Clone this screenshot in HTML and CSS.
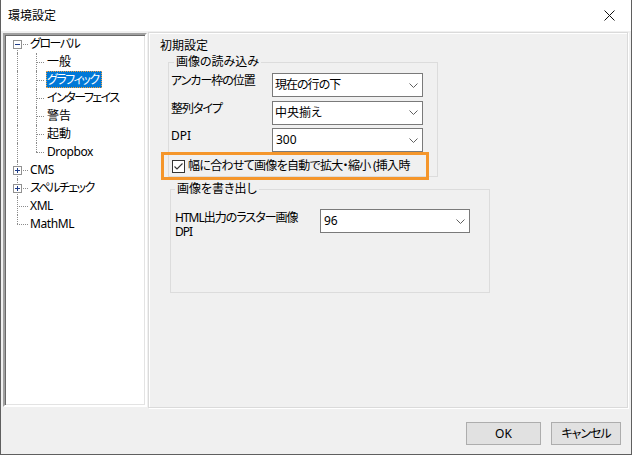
FILE: index.html
```html
<!DOCTYPE html>
<html lang="ja">
<head>
<meta charset="utf-8">
<title>環境設定</title>
<link rel="stylesheet" href="styles.css">
</head>
<body>
<div class="window">
  <header class="titlebar">
    <span class="title">環境設定</span>
    <svg class="close" width="11" height="11" viewBox="0 0 11 11"><path d="M0.5 0.5 L10.5 10.5 M10.5 0.5 L0.5 10.5" stroke="#111" stroke-width="1" fill="none"/></svg>
  </header>
  <div class="main">
    <div class="tree">
      <div class="row"><span class="c0 first"><i class="exp minus"></i></span><span class="label kana">グローバル</span></div>
      <div class="row"><span class="c0 pass"></span><span class="c1 mid"></span><span class="label">一般</span></div>
      <div class="row"><span class="c0 pass"></span><span class="c1 mid"></span><span class="label kana selected">グラフィック</span></div>
      <div class="row"><span class="c0 pass"></span><span class="c1 mid"></span><span class="label kana">インターフェイス</span></div>
      <div class="row"><span class="c0 pass"></span><span class="c1 mid"></span><span class="label">警告</span></div>
      <div class="row"><span class="c0 pass"></span><span class="c1 mid"></span><span class="label">起動</span></div>
      <div class="row"><span class="c0 pass"></span><span class="c1 last"></span><span class="label latin">Dropbox</span></div>
      <div class="row"><span class="c0 mid"><i class="exp plus"></i></span><span class="label latin">CMS</span></div>
      <div class="row"><span class="c0 mid"><i class="exp plus"></i></span><span class="label kana">スペルチェック</span></div>
      <div class="row"><span class="c0 mid"></span><span class="label latin">XML</span></div>
      <div class="row"><span class="c0 last"></span><span class="label latin">MathML</span></div>
    </div>
    <section class="panel">
      <div class="heading">初期設定</div>
      <fieldset class="group g1">
        <legend>画像の読み込み</legend>
        <div class="field">
          <span class="flabel tight">アンカー枠の位置</span>
          <div class="select"><span class="tight">現在の行の下</span><svg class="chev" width="9" height="5" viewBox="0 0 9 5"><path d="M0.5 0.5 L4.5 4.5 L8.5 0.5" stroke="#606060" stroke-width="1" fill="none"/></svg></div>
        </div>
        <div class="field">
          <span class="flabel tight">整列タイプ</span>
          <div class="select"><span>中央揃え</span><svg class="chev" width="9" height="5" viewBox="0 0 9 5"><path d="M0.5 0.5 L4.5 4.5 L8.5 0.5" stroke="#606060" stroke-width="1" fill="none"/></svg></div>
        </div>
        <div class="field">
          <span class="flabel">DPI</span>
          <div class="select"><span class="num">300</span><svg class="chev" width="9" height="5" viewBox="0 0 9 5"><path d="M0.5 0.5 L4.5 4.5 L8.5 0.5" stroke="#606060" stroke-width="1" fill="none"/></svg></div>
        </div>
        <div class="check">
          <svg class="cbox" width="13" height="13" viewBox="0 0 13 13"><rect x="0.5" y="0.5" width="12" height="12" fill="#fff" stroke="#333"/><path d="M2.5 6.5 L5 9 L10.5 3.5" stroke="#333" stroke-width="1.1" fill="none"/></svg>
          <span class="ctext">幅に合わせて画像を自動で拡大・縮小 (挿入時</span>
        </div>
      </fieldset>
      <fieldset class="group g2">
        <legend>画像を書き出し</legend>
        <div class="field f2">
          <span class="flabel2 tight">HTML出力のラスター画像<br>DPI</span>
          <div class="select wide"><span class="num">96</span><svg class="chev" width="9" height="5" viewBox="0 0 9 5"><path d="M0.5 0.5 L4.5 4.5 L8.5 0.5" stroke="#606060" stroke-width="1" fill="none"/></svg></div>
        </div>
      </fieldset>
    </section>
  </div>
  <div class="buttons">
    <button class="btn ok">OK</button>
    <button class="btn cancel">キャンセル</button>
  </div>
</div>
</body>
</html>
```
FILE: styles.css
```css
*, *::before, *::after { box-sizing: border-box; }
html, body { margin: 0; padding: 0; }
body {
  font-family: "Noto Sans", "Noto Sans CJK JP", sans-serif;
  font-size: 12px;
  font-feature-settings: "palt" 1;
  color: #000;
  background: #f0f0f0;
}
.window {
  width: 632px;
  height: 455px;
  background: #f0f0f0;
  border: 1px solid #5f5f5f;
  border-top: none;
  display: flex;
  flex-direction: column;
}
.titlebar {
  height: 31px;
  flex: none;
  background: #fff;
  display: flex;
  align-items: center;
  justify-content: space-between;
  padding: 0 16px 0 7px;
}
.title { line-height: 16px; }
.close { display: block; }

.main {
  height: 377px;
  flex: none;
  display: flex;
  align-items: flex-start;
  padding: 1px 3px 0 2px;
  gap: 1px;
}
.tree {
  width: 144px;
  height: 374px;
  margin-top: 1px;
  background: #fff;
  border: 2px solid;
  border-color: #a0a0a0 #fff #fff #a0a0a0;
  box-shadow: inset 1px 1px 0 #696969, inset -1px -1px 0 #e3e3e3;
}
.row {
  height: 18px;
  display: flex;
  align-items: flex-start;
}
.c0, .c1 { position: relative; height: 18px; flex: none; }
.c0 { width: 24px; }
.c1 { width: 17px; }
.c0::before, .c1::before {
  content: "";
  position: absolute;
  width: 1px;
  border-left: 1px dotted #8c8c8c;
}
.c0::before { left: 12px; }
.c1::before { left: 7px; }
.mid::before, .pass::before { top: 0; bottom: 0; }
.first::before { top: 9px; bottom: 0; }
.last::before { top: 0; height: 9px; }
.c0::after, .c1::after {
  content: "";
  position: absolute;
  top: 9px;
  height: 1px;
  border-top: 1px dotted #8c8c8c;
}
.c0::after { left: 12px; width: 11px; }
.c1::after { left: 7px; width: 8px; }
.pass::after { display: none; }
.exp {
  position: absolute;
  left: 8px;
  top: 5px;
  width: 9px;
  height: 9px;
  border: 1px solid #919191;
  background-color: #fff;
  z-index: 1;
}
.exp.minus {
  background: #fff linear-gradient(#1f3c88, #1f3c88) center / 5px 1px no-repeat;
}
.exp.plus {
  background:
    linear-gradient(#1f3c88, #1f3c88) center / 5px 1px no-repeat,
    linear-gradient(#1f3c88, #1f3c88) center / 1px 5px no-repeat,
    #fff;
}
.label {
  height: 17px;
  line-height: 15px;
  padding: 0 1px 0 0;
  border: 1px solid transparent;
  white-space: nowrap;
}
.label.kana { letter-spacing: -1.5px; padding-right: 2px; }
.label.latin { letter-spacing: -0.4px; }
.label.selected {
  background: #0078d7;
  color: #fff;
  border: 1px dotted #f0a040;
}

.panel {
  width: 480px;
  height: 376px;
  border: 1px solid #dadada;
  box-shadow: inset 1px 1px 0 #fff, 1px 1px 0 #fff;
  padding: 5px 0 0 11px;
}
.heading { line-height: 16px; }
.group {
  margin: 0;
  padding: 0;
  border: 1px solid #dcdcdc;
  min-width: 0;
}
.group legend {
  line-height: 16px;
  padding: 0 2px;
}
.g1 {
  margin-left: 8px;
  width: 270px;
  height: 123px;
  padding: 3px 0 0 0;
}
.g1 legend { margin-left: 5px; }
.g2 {
  margin: 4px 0 0 10px;
  width: 320px;
  height: 112px;
  padding: 12px 0 0 0;
}
.g2 legend { margin-left: 4px; }
.tight { letter-spacing: -1px; }
.field {
  display: flex;
  align-items: flex-start;
  padding-left: 2px;
}
.field + .field { margin-top: 3.5px; }
.flabel {
  width: 101px;
  line-height: 16px;
  white-space: nowrap;
}
.select {
  width: 151px;
  height: 24px;
  background: #fff;
  border: 1px solid #7a7a7a;
  display: flex;
  align-items: center;
  justify-content: space-between;
  padding: 0 4px 0 2px;
  line-height: 16px;
}
.select .num { padding-left: 1px; }
.select.wide { width: 150px; }
.chev { display: block; flex: none; }
.f2 { padding-left: 4px; }
.flabel2 {
  width: 145px;
  line-height: 14px;
  margin-top: 2px;
}
.check {
  position: relative;
  margin-top: 6px;
  height: 16px;
  display: flex;
  align-items: center;
  padding-left: 3px;
  gap: 3px;
}
.cbox { display: block; flex: none; }
.ctext { line-height: 16px; white-space: nowrap; letter-spacing: -0.7px; }
.check::after {
  content: "";
  position: absolute;
  left: -8px;
  top: -6px;
  width: 268px;
  height: 28px;
  border: 3px solid #f5962b;
}

.buttons {
  margin-top: 14px;
  height: 23px;
  flex: none;
  display: flex;
  justify-content: flex-end;
  gap: 10px;
  padding-right: 10px;
}
.btn {
  height: 23px;
  font: inherit;
  font-feature-settings: "palt" 1;
  background: #e1e1e1;
  border: 1px solid #adadad;
  padding: 0;
  color: #000;
  line-height: 16px;
}
.btn.ok { width: 75px; }
.btn.cancel { width: 70px; letter-spacing: -1px; }
```
